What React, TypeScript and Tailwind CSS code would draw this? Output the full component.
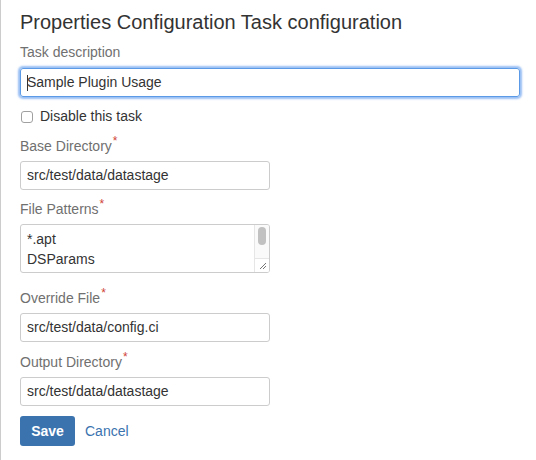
const font = { fontFamily: '"Liberation Sans", Arial, sans-serif' }

function Label({ text, required }: { text: string; required?: boolean }) {
  return (
    <div className="text-[14px] leading-5 h-5 text-[#707070] mb-[5px]">
      {text}
      {required && (
        <span className="text-[12px] leading-none text-[#d04437] relative -top-[6px] ml-[1px]">*</span>
      )}
    </div>
  )
}

function TextInput({ value }: { value: string }) {
  return (
    <div className="w-[250px] h-[29px] border border-[#cccccc] rounded-[3px] bg-white px-[6px] flex items-center text-[14px] text-[#333]">
      {value}
    </div>
  )
}

export default function App() {
  return (
    <div style={font} className="w-[536px] h-[460px] bg-white border-l border-[#cccccc] pl-[19px] pt-[10px]">
      <h1 className="text-[20px] leading-6 text-[#333] font-normal">
        Properties Configuration Task configuration
      </h1>

      <div className="mt-[8px]">
        <div className="text-[14px] leading-5 text-[#707070] mb-[6px]">Task description</div>
        <div className="w-[500px] h-[29px] border border-[#5b9ae6] rounded-[3px] shadow-[0_0_2px_2px_rgba(120,170,240,0.75)] px-[6px] flex items-center text-[14px] text-[#333]">
          <span className="w-px h-[16px] bg-[#333] -mr-px"></span>
          Sample Plugin Usage
        </div>
      </div>

      <label className="mt-[9px] flex items-center h-5 text-[14px] text-[#333]">
        <span className="w-[12px] h-[12px] border border-[#a0a0a0] rounded-[3px] bg-white ml-[1px] mr-[7px] mt-[2px]"></span>
        Disable this task
      </label>

      <div className="mt-[10px]">
        <Label text="Base Directory" required />
        <TextInput value="src/test/data/datastage" />
      </div>

      <div className="mt-[9px]">
        <Label text="File Patterns" required />
        <div className="w-[250px] h-[49px] border border-[#cccccc] rounded-[3px] bg-white flex overflow-hidden">
          <div className="flex-1 px-[6px] pt-[4px] text-[14px] leading-5 text-[#333]">
            <div>*.apt</div>
            <div>DSParams</div>
          </div>
          <div className="w-[15px] border-l border-[#e6e6e6] bg-[#fafafa] flex flex-col">
            <div className="flex-1 pt-[2px] flex justify-center">
              <div className="w-[8px] h-[18px] rounded-full bg-[#c1c1c1]"></div>
            </div>
            <div className="h-[14px] border-t border-[#e6e6e6] bg-white flex items-end justify-end">
              <svg width="9" height="9" viewBox="0 0 9 9" className="mr-[2px] mb-[2px]">
                <path d="M8 2 L2 8 M8 5 L5 8" stroke="#777" strokeWidth="1" />
              </svg>
            </div>
          </div>
        </div>
      </div>

      <div className="mt-[15px]">
        <Label text="Override File" required />
        <TextInput value="src/test/data/config.ci" />
      </div>

      <div className="mt-[10px]">
        <Label text="Output Directory" required />
        <TextInput value="src/test/data/datastage" />
      </div>

      <div className="mt-[10px] flex items-center">
        <button className="w-[55px] h-[30px] rounded-[3px] bg-[#3b73af] text-white font-bold text-[14px]">
          Save
        </button>
        <span className="ml-[10px] text-[14px] text-[#3b73af]">Cancel</span>
      </div>
    </div>
  )
}
